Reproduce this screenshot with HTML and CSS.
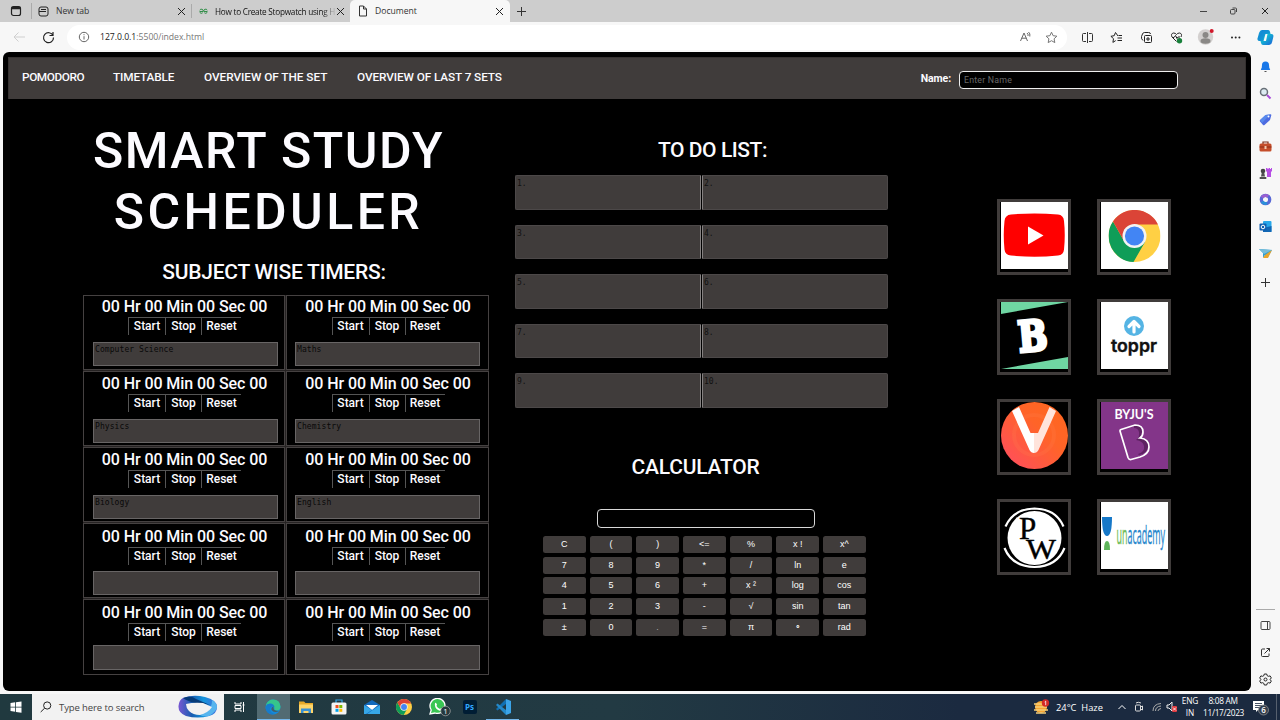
FILE: index.html
```html
<!DOCTYPE html>
<html lang="en">
<head>
<meta charset="utf-8">
<title>Document</title>
<link rel="stylesheet" href="styles.css">
</head>
<body>
<svg class="defs" width="0" height="0">
  <symbol id="chrome" viewBox="0 0 52 52">
    <circle cx="26" cy="26" r="26" fill="#ffd044"/>
    <path d="M4.5 11.500 A26 26 0 0 0 25 52 L36.500 32 L26 26 L15.500 31 Z" fill="#0f9d58"/>
    <path d="M4.500 11.500 A26 26 0 0 1 49.500 14.500 H26 L15.500 31 Z" fill="#db4437"/>
    <circle cx="26" cy="26" r="12" fill="#f3f3f3"/><circle cx="26" cy="26" r="9.600" fill="#4285f4"/>
  </symbol>
</svg>

<header class="tabs">
  <div class="tab-menu"><svg width="12" height="12" viewBox="0 0 12 12"><rect x="1.500" y="1.500" width="9" height="9" rx="2" fill="none" stroke="#222" stroke-width="1.200"/><path d="M1.500 3.500h9M1.500 2.500h9" stroke="#222" stroke-width="1.300"/></svg></div>
  <div class="tab tab-new"><svg width="11" height="11" viewBox="0 0 11 11" fill="none" stroke="#222"><rect x="1" y="1" width="9" height="9" rx="2"/><path d="M3 3.500h5M1 5.500h7"/></svg><span>New tab</span><i class="x"></i></div>
  <div class="tab tab-how"><svg width="9" height="7" viewBox="0 0 11 8" fill="none" stroke="#2f8d46" stroke-width="1.200"><path d="M1 2.500a2 2 0 0 1 4 1.500H1a2 2 0 0 0 3.500 1.500M10 2.500A2 2 0 0 0 6 4h4a2 2 0 0 1-3.500 1.500"/></svg><span class="fade">How to Create Stopwatch using H</span><i class="x"></i></div>
  <div class="tab tab-doc"><svg width="10" height="12" viewBox="0 0 10 12" fill="none" stroke="#333"><path d="M1.500 1h4l3 3v7h-7zM5.500 1v3h3"/></svg><span>Document</span><i class="x"></i></div>
  <div class="plus"></div>
  <div class="window-buttons">
    <svg width="10" height="10" viewBox="0 0 10 10"><path d="M2 5.500h7" stroke="#444"/></svg>
    <svg width="10" height="10" viewBox="0 0 10 10" fill="none" stroke="#444"><rect x="1.500" y="3.500" width="4.500" height="4.500" rx="1"/><path d="M3.500 2h3a1 1 0 0 1 1 1v3"/></svg>
    <svg width="10" height="10" viewBox="0 0 10 10"><path d="M2 2l6 6M8 2l-6 6" stroke="#222"/></svg>
  </div>
</header>

<div class="toolbar">
  <svg class="back" width="14" height="12" viewBox="0 0 14 12" fill="none" stroke="#cfcfcf"><path d="M13 6H2M6.500 1.500L2 6l4.500 4.500"/></svg>
  <svg class="reload" width="13" height="13" viewBox="0 0 13 13" fill="none" stroke="#222" stroke-width="1.200"><path d="M11 4.500a5 5 0 1 0 .5 2M11 1v3.500H7.500"/></svg>
  <div class="address">
    <svg width="12" height="12" viewBox="0 0 12 12" fill="none" stroke="#666"><circle cx="6" cy="6" r="4.700"/><path d="M6 5.200v3.300M6 3.200v1"/></svg>
    <span class="url"><b>127.0.0.1</b>:5500/index.html</span>
    <svg class="read" width="13" height="12" viewBox="0 0 13 12" fill="none" stroke="#666"><path d="M1.500 10L5 2l3.500 8M2.700 7.200h4.600M8 2q1.500 1 1 3M9.500 1q2 1.500 1.300 4.500"/></svg>
    <svg width="13" height="13" viewBox="0 0 13 13" fill="none" stroke="#777"><path d="M6.500 1.200l1.600 3.500 3.800.5-2.800 2.600.7 3.800-3.300-1.900-3.300 1.900.7-3.800L1.100 5.200l3.800-.5z"/></svg>
  </div>
  <div class="actions">
    <svg width="13" height="13" viewBox="0 0 13 13" fill="none" stroke="#333"><path d="M5 2.500H2.500a1 1 0 0 0-1 1v6a1 1 0 0 0 1 1H5M8 2.500h2.500a1 1 0 0 1 1 1v6a1 1 0 0 1-1 1H8M6.500 1v11"/></svg>
    <svg width="13" height="13" viewBox="0 0 13 13" fill="none" stroke="#222"><path d="M8 5L5.500 1.500 4.200 4.700l-3.300.6 2.600 2.400-.6 3.700 2.800-1.800M8.500 4.500H12M7.500 7H12M7.500 9.500H12"/></svg>
    <svg width="13" height="13" viewBox="0 0 13 13" fill="none" stroke="#222"><path d="M3 9.500Q1 8 1.500 5.500L2.500 3q.5-1.500 2-1.500h4q2 0 2 1.500"/><rect x="4.500" y="4.500" width="7" height="7" rx="1"/><path d="M8 6v4M6 8h4"/></svg>
    <svg width="13" height="13" viewBox="0 0 13 13" fill="none" stroke="#222"><path d="M6.500 10.500L2 6Q.5 2.500 3.500 2q2 0 3 1.500Q7.500 2 9.500 2q3 .5 1.500 4M2 6.500h2l1.500-2 1.500 3 1-1.500h2"/><circle cx="9.500" cy="9.800" r="2.700" fill="#18803a" stroke="none"/></svg>
    <svg width="18" height="18" viewBox="0 0 18 18"><circle cx="8.500" cy="9" r="7.700" fill="#d3d0cf"/><circle cx="8.500" cy="7" r="3" fill="#8a8886"/><ellipse cx="8.500" cy="13" rx="5" ry="2.700" fill="#8a8886"/><circle cx="14.700" cy="3" r="2" fill="#d1182b"/></svg>
    <svg width="13" height="13" viewBox="0 0 13 13" fill="#222"><circle cx="3" cy="6.500" r="1"/><circle cx="6.700" cy="6.500" r="1"/><circle cx="10.400" cy="6.500" r="1"/></svg>
    <svg width="17" height="17" viewBox="0 0 17 17"><defs><linearGradient id="cp" x2="1" y2="1"><stop stop-color="#1688d9"/><stop offset=".5" stop-color="#14b7d2"/><stop offset="1" stop-color="#1b5ed8"/></linearGradient></defs><path d="M5 1h6q1.500 0 2 2l.5 2h1Q17 5 16.300 8l-1.200 5q-.8 3-3 3H6q-1.500 0-2-2l-.5-2H2.500Q0 12 .7 9l1.300-5Q3 1 5 1z" fill="url(#cp)"/><path d="M8.500 5h2L9 12H6.500z" fill="#f7f7f7"/><path d="M5 1h6q1.500 0 2 2l.3 1.500H9Q7.500 4.500 7 7l-1 5H2.500Q0 12 .7 9z" fill="#1479d3" opacity=".5"/></svg>
  </div>
</div>

<div class="workspace">
<main class="page">
  <nav class="nav">
    <a>POMODORO</a><a>TIMETABLE</a><a>OVERVIEW OF THE SET</a><a>OVERVIEW OF LAST 7 SETS</a>
    <label>Name:</label><div class="name-input">Enter Name</div>
  </nav>
  <div class="columns">
    <section class="study">
      <h1>SMART STUDY<br><span>SCHEDULER</span></h1>
      <h2 class="h-timers">SUBJECT WISE TIMERS:</h2>
      <div class="timers">
        <div class="timer"><p>00 Hr 00 Min 00 Sec 00</p><div class="btns"><b>Start</b><b>Stop</b><b>Reset</b></div><div class="note">Computer Science</div></div>
        <div class="timer"><p>00 Hr 00 Min 00 Sec 00</p><div class="btns"><b>Start</b><b>Stop</b><b>Reset</b></div><div class="note">Maths</div></div>
        <div class="timer mid"><p>00 Hr 00 Min 00 Sec 00</p><div class="btns"><b>Start</b><b>Stop</b><b>Reset</b></div><div class="note">Physics</div></div>
        <div class="timer mid"><p>00 Hr 00 Min 00 Sec 00</p><div class="btns"><b>Start</b><b>Stop</b><b>Reset</b></div><div class="note">Chemistry</div></div>
        <div class="timer mid"><p>00 Hr 00 Min 00 Sec 00</p><div class="btns"><b>Start</b><b>Stop</b><b>Reset</b></div><div class="note">Biology</div></div>
        <div class="timer mid"><p>00 Hr 00 Min 00 Sec 00</p><div class="btns"><b>Start</b><b>Stop</b><b>Reset</b></div><div class="note">English</div></div>
        <div class="timer low"><p>00 Hr 00 Min 00 Sec 00</p><div class="btns"><b>Start</b><b>Stop</b><b>Reset</b></div><div class="note"></div></div>
        <div class="timer low"><p>00 Hr 00 Min 00 Sec 00</p><div class="btns"><b>Start</b><b>Stop</b><b>Reset</b></div><div class="note"></div></div>
        <div class="timer last"><p>00 Hr 00 Min 00 Sec 00</p><div class="btns"><b>Start</b><b>Stop</b><b>Reset</b></div><div class="note"></div></div>
        <div class="timer last"><p>00 Hr 00 Min 00 Sec 00</p><div class="btns"><b>Start</b><b>Stop</b><b>Reset</b></div><div class="note"></div></div>
      </div>
    </section>

    <section class="middle">
      <h2 class="h-todo">TO DO LIST:</h2>
      <div class="todo">
        <div>1.</div><div>2.</div><div>3.</div><div>4.</div><div>5.</div><div>6.</div><div>7.</div><div>8.</div><div>9.</div><div>10.</div>
      </div>
      <h2 class="h-calc">CALCULATOR</h2>
      <div class="display"></div>
      <div class="keys">
        <b>C</b><b>(</b><b>)</b><b>&lt;=</b><b>%</b><b>x !</b><b>x^</b>
        <b>7</b><b>8</b><b>9</b><b>*</b><b>/</b><b>ln</b><b>e</b>
        <b>4</b><b>5</b><b>6</b><b>+</b><b>x ²</b><b>log</b><b>cos</b>
        <b>1</b><b>2</b><b>3</b><b>-</b><b>√</b><b>sin</b><b>tan</b>
        <b>±</b><b>0</b><b class="dim">.</b><b>=</b><b>π</b><b>∘</b><b>rad</b>
      </div>
    </section>

    <section class="links">
      <a class="tile"><svg viewBox="0 0 67 67"><rect width="67" height="67" fill="#fff"/><path d="M10 12.500Q33.500 10.500 57 12.500 62.500 13 63 19 64.500 33 63 47.500 62.500 53 57 53.500 33.500 56 10 53.500 4 53 3.500 47.500 2 33 3.500 19 4 13 10 12.500z" fill="#f00"/><path d="M27 24.500v18L42.500 33.500z" fill="#fff"/></svg></a>
      <a class="tile"><svg viewBox="0 0 67 67"><rect width="67" height="67" fill="#fff"/><use href="#chrome" x="7.500" y="8" width="52" height="52"/></svg></a>
      <a class="tile"><svg viewBox="0 0 67 67"><rect width="67" height="67"/><path d="M0 0h67L0 12zM67 67H0l67-12z" fill="#6fd6a3"/><text transform="translate(18.500 50) rotate(-5)" textLength="29" lengthAdjust="spacingAndGlyphs" font-family="DejaVu Serif" font-weight="bold" font-size="42" fill="#fff" stroke="#fff" stroke-width="3.500">B</text></svg></a>
      <a class="tile"><svg viewBox="0 0 67 67"><rect width="67" height="67" fill="#fff"/><circle cx="33" cy="24" r="10" fill="#55b4e4"/><path d="M33 30v-9M28 24.500l5-5 5 5" fill="none" stroke="#fff" stroke-width="3.200" stroke-linecap="round" stroke-linejoin="round"/><text x="10" y="50" textLength="46" lengthAdjust="spacingAndGlyphs" font-family="Inter" font-weight="600" font-size="18" fill="#111" stroke="#111" stroke-width=".4">toppr</text></svg></a>
      <a class="tile"><svg viewBox="0 0 67 67"><defs><linearGradient id="v" x1="0" y1="1" x2="1" y2="0"><stop stop-color="#ff4b63"/><stop offset=".6" stop-color="#ff6428"/><stop offset="1" stop-color="#ff671d"/></linearGradient></defs><circle cx="33.500" cy="33.500" r="33.500" fill="url(#v)"/><circle cx="33" cy="33" r="20" fill="none" stroke="#ff8050" stroke-width="4" opacity=".2"/><path d="M11 9L18 5 29.500 31H33V51q-3 0-4.500-3z" fill="#fff"/><path d="M55 9L48.500 5 37 31H33V51q3 0 4.500-3z" fill="#ffe4dc"/></svg></a>
      <a class="tile"><svg viewBox="0 0 67 67"><rect width="67" height="67" fill="#833589"/><text x="13.500" y="17" textLength="39" lengthAdjust="spacingAndGlyphs" font-family="Lato" font-weight="bold" font-size="12.500" fill="#fff">BYJU'S</text><path d="M33 24q8-1 8 5 0 4-3 7 9 0 9 8 0 7-9 9l-1-1q7-2 6-8-1-5-8-6 4-3 3-8-1-4-5-4z" fill="#5e2262"/><path d="M20 27.500l14-4.500q8 0 8 7 0 4-3 6 9 1 9 9 0 7-9 10l-9 2.500q-2 .5-3-2L19 29q-.3-1 1-1.500z" fill="none" stroke="#fff" stroke-width="1.700"/></svg></a>
      <a class="tile"><svg viewBox="0 0 67 67"><circle cx="33.500" cy="36" r="27" fill="#fff"/><path d="M4.500 24.500Q12 7 33.500 6.500 55 7 62.500 24.500M3.500 46Q11 64.500 33.500 65 56 64.500 63.500 46" fill="none" stroke="#fff" stroke-width="2.200"/><text x="18" y="36.500" font-family="Liberation Serif" font-size="31" fill="#000" stroke="#000" stroke-width=".4">P</text><text x="25" y="57" textLength="30" lengthAdjust="spacingAndGlyphs" font-family="Liberation Serif" font-size="30" fill="#000" stroke="#000" stroke-width=".4">W</text></svg></a>
      <a class="tile"><svg viewBox="0 0 67 67"><rect width="67" height="67" fill="#fff"/><path d="M1 15h10q0 19-5 19T1 15z" fill="#1678c8"/><path d="M3 48q0-9 3-9t3 9z" fill="#5eb55b"/><text transform="translate(15.500 42) scale(.345 1)" font-family="Open Sans" font-size="26" stroke-width=".4"><tspan fill="#6fbd56" stroke="#6fbd56">un</tspan><tspan fill="#2787cc" stroke="#2787cc">academy</tspan></text></svg></a>
    </section>
  </div>
</main>

<aside class="side">
  <svg viewBox="0 0 13 13"><path d="M2 9q1-1 1-4a3.500 3.500 0 0 1 7 0q0 3 1 4 .5 1-.5 1h-8q-1 0-.5-1z" fill="#1877e8"/><path d="M5 11h3q-1.500 2-3 0z" fill="#444"/></svg>
  <svg viewBox="0 0 13 13"><circle cx="5" cy="5" r="3.500" fill="#ddebf2" stroke="#687078" stroke-width="1.500"/><path d="M8 8l3.500 3.500" stroke="#a94bd8" stroke-width="2"/></svg>
  <svg viewBox="0 0 13 13"><path d="M1 7l5.500-5 5-.7q1 0 .8 1L11 7l-5.500 5q-1 .6-1.700-.3L1 8.500q-.6-.8 0-1.500z" fill="#4d6be0"/><path d="M1 7l5.500-5 5-.7L3 10z" fill="#5f9df5" opacity=".6"/><circle cx="9.500" cy="3.500" r="1" fill="#fff"/></svg>
  <svg viewBox="0 0 13 13"><path d="M4 4V2h5v2" fill="none" stroke="#7c2d18" stroke-width="1.200"/><rect x=".5" y="3.500" width="12" height="8" rx="1.500" fill="#c54e2b"/><path d="M.5 7h12" stroke="#8b2d18"/><rect x="5.500" y="6" width="2" height="3" fill="#f3c8ad"/></svg>
  <svg viewBox="0 0 13 13"><path d="M7 1h1.500v1h1V1h1.500v1h1V1H13v3l-1 1v5H8V5L7 4z" fill="#b64ee4"/><circle cx="4" cy="4" r="2.300" fill="#444"/><path d="M2.700 6h2.600l.7 3.500H2zM.7 10h6.600v2H.7z" fill="#505050"/></svg>
  <svg viewBox="0 0 13 13"><circle cx="6.500" cy="6.500" r="4.200" fill="none" stroke="#5968d6" stroke-width="3.300"/><path d="M3 4.500a4 4 0 0 1 6-1" fill="none" stroke="#9a60d0" stroke-width="3"/><path d="M3 8.500a4 4 0 0 0 5 1.500" fill="none" stroke="#2b91d9" stroke-width="3"/></svg>
  <svg viewBox="0 0 13 13"><rect x="4" y="1" width="8.500" height="11" rx="1" fill="#28a8ea"/><path d="M4 8l8.500-2v6H4z" fill="#1267b4"/><rect x=".5" y="3.500" width="7" height="7" rx="1" fill="#0f5fb0"/><circle cx="4" cy="7" r="1.800" fill="none" stroke="#fff"/></svg>
  <svg viewBox="0 0 13 13"><path d="M0 2l13 1-4.500 8L6 8l-2 3V6z" fill="#2e9fd5"/><path d="M0 2l13 1-8 4z" fill="#77bdd8"/><path d="M4 11l2-3L13 3l-4 8z" fill="#e8a52b"/></svg>
  <svg viewBox="0 0 13 13"><path d="M6.500 4v9M2 8.500h9" stroke="#333"/></svg>
  <hr>
  <svg class="side-low" viewBox="0 0 13 13" fill="none" stroke="#444"><rect x="2" y="2.500" width="9" height="8" rx="1"/><path d="M8.500 2.500v8"/></svg>
  <svg class="side-low" viewBox="0 0 13 13" fill="none" stroke="#333"><path d="M6 3H3.500a1 1 0 0 0-1 1v5.500a1 1 0 0 0 1 1H9a1 1 0 0 0 1-1V7.500M5.500 7.500l5-5M7.500 2.500h3v3"/></svg>
  <svg class="side-low" viewBox="0 0 13 13" fill="none" stroke="#222"><path d="M5.300 1h2.400l.5 1.700 1.200.6 1.700-.4 1.200 2-1.200 1.600 1.200 1.600-1.200 2-1.700-.4-1.200.6-.5 1.700H5.300l-.5-1.700-1.200-.6-1.700.4-1.200-2 1.200-1.600L.7 4.900l1.200-2 1.700.4 1.200-.6z"/><circle cx="6.500" cy="6.500" r="1.500"/></svg>
</aside>
</div>

<footer class="taskbar">
  <div class="start"><svg width="12" height="12" viewBox="0 0 12 12" fill="#fff"><path d="M.5 2l4.700-.7v4.400H.5zM6 1.200L11.500.4v5.300H6zM.5 6.400h4.700v4.400L.5 10.100zM6 6.400h5.500v5.300L6 10.900z"/></svg></div>
  <div class="search"><svg width="12" height="12" viewBox="0 0 12 12" fill="none" stroke="#222"><circle cx="7.200" cy="4.500" r="3.600"/><path d="M4.600 7.200L.7 11"/></svg><span>Type here to search</span>
    <svg class="ribbon" width="40" height="24" viewBox="0 0 40 24"><defs><linearGradient id="rb"><stop stop-color="#7857d2"/><stop offset=".35" stop-color="#185db0"/><stop offset=".65" stop-color="#1595dc"/><stop offset="1" stop-color="#4470dc"/></linearGradient></defs><path d="M5 3Q15-1 27 2q12 3 12 10t-8 9Q20 24 8 21 0 18 .5 11 1 5 5 3z" fill="url(#rb)"/><path d="M5 3q8-3 13 1l14 6q-8-2-15-2-8-2-12-5z" fill="#073b78"/><path d="M34 5q5 3 5 7t-8 9q-6 1-9-1 12-3 12-15z" fill="#56b5ee"/><path d="M8 9q8-2 17-1l9 4q-4 6-12 8-7 0-11-4Q8 13 8 9z" fill="#f2f2f2"/></svg></div>
  <div class="apps">
    <div class="app"><svg viewBox="0 0 16 16" fill="none" stroke="#fff"><path d="M3 3v2h6V3M3 13v-2h6v2M3 6.500h6v3H3zM11.500 3v10M10.500 6h2"/></svg></div>
    <div class="app active"><svg viewBox="0 0 16 16"><circle cx="8" cy="8" r="7.500" fill="#1689d8"/><path d="M1 6Q3 .5 8 .5q7 0 7.500 7 0 4-4 4-3 0-2-2Q9 5 5 5 2 5 1 7z" fill="#36c58b"/><path d="M1 7q1-3 5-2.500Q9 5 9.500 8q-4-2-4.500 2 0 4 5 5Q2 17 .5 9z" fill="#167ccd"/><path d="M8.500 9q0 3 5.500 3Q9 14.500 6.500 11 6 8 8.500 7.500z" fill="#42606a"/></svg></div>
    <div class="app"><svg viewBox="0 0 16 16"><path d="M1 2.500h5l1.500 1.500H15v10H1z" fill="#e8a928"/><path d="M1 5.500h14V14H1z" fill="#ffd568"/><path d="M3 14V9.500h10V14h-2.500v-2h-5v2z" fill="#3a91d3"/></svg></div>
    <div class="app"><svg viewBox="0 0 16 16"><path d="M5 4V1h6v3" fill="none" stroke="#38a8e8" stroke-width="1.200"/><rect x=".5" y="3.500" width="15" height="12" rx="1.500" fill="#f4f4f4"/><path d="M4.500 6h3v3h-3z" fill="#f25022"/><path d="M8.300 6h3v3h-3z" fill="#7fba00"/><path d="M4.500 9.800h3v3h-3z" fill="#00a4ef"/><path d="M8.300 9.800h3v3h-3z" fill="#ffb900"/></svg></div>
    <div class="app"><svg viewBox="0 0 16 16"><path d="M0 6l8-5 8 5v9H0z" fill="#1269bd"/><path d="M2 6h12L8 11z" fill="#fff"/><path d="M0 6l8 5-6 4H0zM16 6v9H3z" fill="#37a7e7"/></svg></div>
    <div class="app"><svg viewBox="0 0 16 16"><use href="#chrome" width="16" height="16"/></svg></div>
    <div class="app"><svg class="wa" viewBox="0 0 22 19"><path d="M1 16L2.200 12A7.500 7.500 0 1 1 6 15z" fill="#39c653" stroke="#fff" stroke-width="1.300"/><path d="M6 5q1-1 2 1.500L7.500 8q1 2 3.500 3l1.200-1q2 .7 1.300 1.700-1 2-4 .5Q5 10 6 5z" fill="#fff"/><circle cx="16.500" cy="13" r="4.800" fill="#25383d" stroke="#aaa" stroke-width=".7"/><text x="14.300" y="16" font-family="Open Sans" font-size="8" fill="#fff">1</text></svg></div>
    <div class="app"><svg viewBox="0 0 16 16"><rect x="1" y="1" width="14" height="14" rx="2" fill="#001d34"/><text x="3" y="11" font-family="Open Sans" font-weight="bold" font-size="8" fill="#31a8ff">Ps</text></svg></div>
    <div class="app open"><svg viewBox="0 0 16 16"><path d="M11 0v5L2.500 11.500 1 10z" fill="#1070b3"/><path d="M1 6l1.500-1.500L11 11v5z" fill="#2489ca"/><path d="M11 0l5 2v12l-5 2z" fill="#3ba4e8"/></svg></div>
  </div>
  <div class="tray">
    <svg class="weather" width="18" height="17" viewBox="0 0 18 17"><circle cx="8" cy="8" r="6" fill="#f6a431"/><path d="M1 5h8M2 8h12M1 11h14M3 14h10" stroke="#f6ce78" stroke-width="1.500"/><circle cx="12.500" cy="4" r="3.700" fill="#d42b27"/><path d="M11.700 3l1-.8v4" stroke="#fff" stroke-width=".8" fill="none"/></svg>
    <span class="temp">24°C&nbsp; Haze</span>
    <svg class="chev" width="10" height="8" viewBox="0 0 10 8" fill="none" stroke="#fff"><path d="M1.500 6L5 2.500 8.500 6"/></svg>
    <svg class="meet" width="10" height="12" viewBox="0 0 10 12" fill="none" stroke="#ddd"><rect x="1.500" y="4" width="5" height="6" rx="1"/><path d="M6.500 6l2-1v4l-2-1M2 2q2-1.500 5 0"/></svg>
    <svg class="wifi" width="10" height="10" viewBox="0 0 10 10" fill="none" stroke="#aaa"><path d="M1 9Q1 2 9 1.500M3.500 9Q3.500 4.500 9 4M6 9Q6 7 9 6.500"/></svg>
    <svg class="vol" width="12" height="12" viewBox="0 0 12 12"><path d="M1 4h2l3-3v9L3 7H1z" fill="none" stroke="#eee"/><rect x="6" y="5" width="5" height="6" rx="1" fill="#e03b40"/><path d="M7 6.500l3 3M10 6.500l-3 3" stroke="#fff" stroke-width=".8"/></svg>
    <span class="two">ENG<br>IN</span>
    <span class="two clock">8:08 AM<br>11/17/2023</span>
    <svg class="notif" width="18" height="18" viewBox="0 0 18 18"><path d="M1 3h11v9H6l-2 2v-2H1z" fill="#fff"/><path d="M3 5.500h7M3 7.500h7M3 9.500h5" stroke="#1b2a40" stroke-width=".8"/><circle cx="11.500" cy="12" r="5" fill="#35404e" stroke="#999" stroke-width=".7"/><text x="9.300" y="15" font-family="Open Sans" font-weight="600" font-size="8" fill="#fff">6</text></svg>
    <i class="desk"></i>
  </div>
</footer>
</body>
</html>
```
FILE: styles.css
```css
* { box-sizing: border-box; }
body { margin: 0; width: 1280px; height: 720px; overflow: hidden; background: #f7f7f7; font-family: "Open Sans", sans-serif; display: flex; flex-direction: column; }
svg { display: block; flex: none; }
.defs { position: absolute; }
h1, h2, p { margin: 0; }

.tabs { height: 22px; flex: none; background: #cdcdcd; display: flex; align-items: center; font-size: 8.6px; color: #333; }
.tab-menu { width: 32px; height: 16px; padding: 2px 0 0 10px; border-right: 1px solid #aaa; }
.tab { display: flex; align-items: center; height: 22px; white-space: nowrap; }
.tab span { margin-left: 7px; flex: 1; }
.tab-new { width: 160px; padding: 0 7px 0 6px; background: linear-gradient(#aaa, #aaa) right center / 1px 14px no-repeat; }
.tab-how { width: 158px; padding: 0 6px 0 7px; font-size: 8.200px; letter-spacing: -.24px; }
.tab-how .fade { min-width: 0; margin-left: 7px; margin-right: 0; color: #111; }
.fade { mask-image: linear-gradient(90deg, #000 88%, transparent); }
.tab-doc { width: 160px; background: #f7f7f7; border-radius: 5px 5px 0 0; padding: 0 7px 0 8px; }
.x { flex: none; width: 7px; height: 7px; background: linear-gradient(45deg, transparent 44%, #222 44% 56%, transparent 56%), linear-gradient(-45deg, transparent 44%, #222 44% 56%, transparent 56%); }
.plus { width: 9px; height: 9px; margin-left: 7px; background: linear-gradient(#333, #333) center / 9px 1px no-repeat, linear-gradient(#333, #333) center / 1px 9px no-repeat; }
.window-buttons { margin-left: auto; padding-right: 10px; display: flex; gap: 21px; }

.toolbar { height: 30px; flex: none; display: flex; align-items: center; }
.back { margin-left: 12px; }
.reload { margin-left: 16px; }
.address { margin-left: 12px; width: 1002px; height: 25px; border-radius: 13px; background: #fff; display: flex; align-items: center; padding: 0 9px 0 11px; }
.url { flex: 1; margin-left: 10px; font-size: 8.700px; letter-spacing: -.04px; color: #777; }
.url b { font-weight: 400; color: #222; }
.read { margin-right: 13px; }
.actions { margin-left: 5px; display: grid; grid-template-columns: repeat(7, 29.700px); justify-items: center; align-items: center; }

.workspace { height: 642px; flex: none; display: flex; }
.page { width: 1248px; height: 639px; margin-left: 3px; padding: 5px; background: #000; border-radius: 6px; color: #fcfbff; font-family: Roboto, sans-serif; }
.nav { height: 42px; background: #403c3b; border: 1px solid #353130; border-bottom: 0; display: flex; align-items: center; padding: 0 67px 3px 13px; font-size: 11.800px; font-weight: 500; letter-spacing: -.1px; }
.nav a { margin-right: 29px; white-space: nowrap; }
.nav a:nth-child(1) { width: 62px; letter-spacing: -.4px; } .nav a:nth-child(2) { width: 62px; letter-spacing: -.15px; } .nav a:nth-child(3) { width: 124px; letter-spacing: -.04px; } .nav a:nth-child(4) { width: 147px; }
.nav label { margin-left: auto; font-size: 10.500px; font-weight: 700; margin-top: 3px; }
.name-input { margin-left: 8px; margin-top: 5px; width: 219px; height: 18px; border: 1px solid #eee; border-radius: 4px; background: #000; color: #686868; font: 8.800px/16px Roboto, sans-serif; letter-spacing: .2px; padding-left: 4px; }
.columns { display: flex; }

.study { width: 406px; margin-left: 75px; padding-top: 22px; }
h1 { font-size: 50px; line-height: 61px; font-weight: 500; text-align: center; width: 371px; letter-spacing: 1.500px; }
h1 span { letter-spacing: 3.400px; }
h2 { font-size: 21px; line-height: 24px; font-weight: 500; text-align: center; white-space: nowrap; }
.h-timers { width: 382px; margin-top: 17px; letter-spacing: -.25px; }
.timers { margin-top: 11px; display: grid; grid-template-columns: 202px 203px; gap: 1px; grid-template-rows: repeat(4, 75px) 76px; background: #262323; }
.timer { background: #000; border: 1px solid #454141; padding: 3px 9px 0; }
.timer:nth-child(even) { padding-left: 8px; padding-right: 10px; }
.timer p { font-size: 16px; line-height: 16px; font-weight: 500; text-align: center; white-space: nowrap; letter-spacing: -.08px; padding-left: 1px; }
.timer:nth-child(even) p { padding-left: 3px; }
.btns { display: flex; justify-content: center; margin: 2px 0 7px; padding-left: 1px; }
.timer:nth-child(even) .btns { padding-left: 3px; }
.btns b { font-size: 12px; line-height: 16px; font-weight: 500; height: 18px; border-top: 1px solid #555; border-left: 1px solid #555; text-align: center; }
.btns b:nth-child(1) { width: 37px; } .btns b:nth-child(2) { width: 36px; } .btns b:nth-child(3) { width: 40px; }
.note { height: 24px; width: 185px; background: #403c3b; border: 1px solid #686565; color: #080808; font: 8px/12px "DejaVu Sans Mono", monospace; padding: 1px; letter-spacing: .08px; }
.timer.mid { padding-top: 4px; }
.timer.low { padding-top: 5px; }
.timer.low .btns { margin-bottom: 6px; }
.timer.last { padding-top: 5px; }
.timer.last .btns { margin-bottom: 4px; }
.timer.last .note { height: 25px; }

.middle { width: 373px; margin-left: 26px; padding-top: 39px; }
.h-todo { padding-left: 22px; letter-spacing: -.45px; }
.todo { margin-top: 13px; display: grid; grid-template-columns: 186px 186px; column-gap: 1px; row-gap: 15px; grid-template-rows: repeat(5, 34.600px); }
.todo div { background: #403c3b; border: 1px solid #4c4848; font: 8px/13px "DejaVu Sans Mono", monospace; color: #111; padding-left: 1px; padding-top: 1px; border-radius: 2px 0 0 2px; border-right-color: #858181; }
.todo div:nth-child(even) { border-color: #4c4848; border-left-color: #858181; border-radius: 0 2px 2px 0; padding-left: 1px; }
.h-calc { margin-top: 47px; padding-right: 12px; letter-spacing: -.2px; }
.display { margin: 30px 0 0 82px; width: 218px; height: 19px; border: 1px solid #d8d8d8; border-radius: 4px; }
.keys { margin: 8px 0 0 28px; width: 323px; display: grid; grid-template-columns: repeat(7, 42.500px); column-gap: 4.200px; grid-auto-rows: 17px; row-gap: 3.700px; }
.keys b { background: #403c3b; border-radius: 2.500px; font: 9px/17px "Liberation Sans", sans-serif; text-align: center; color: #fff; }
.keys .dim { color: #aaa; }

.links { margin: 100px 0 0 109px; display: grid; grid-template-columns: 74px 74px; column-gap: 26px; grid-auto-rows: 76px; row-gap: 24px; }
.tile { border: 3.500px solid #403c3b; padding-left: .5px; }
.tile svg { width: 67px; height: 67px; }

.side { width: 29px; display: flex; flex-direction: column; align-items: center; }
.side svg { width: 13px; height: 13px; margin: 8px 0 5.700px; }
.side hr { width: 19px; border: 0; border-top: 1px solid #aaa; margin: auto 0 0; }
.side .side-low { margin: 9px 0 5px; }
.side .side-low:last-child { margin-bottom: 8px; }

.taskbar { height: 26px; flex: none; background: linear-gradient(90deg, #20393f, #223a43 48%, #1b2a40 75%); display: flex; color: #fff; }
.start { width: 32px; display: flex; align-items: center; justify-content: center; }
.search { width: 192px; background: #f2f2f2; color: #444; display: flex; align-items: center; padding-left: 8px; font-size: 9.500px; letter-spacing: -.1px; }
.search span { margin-left: 7px; white-space: nowrap; }
.ribbon { margin-left: auto; margin-right: 6px; }
.apps { display: flex; }
.app { width: 32.800px; display: flex; align-items: center; justify-content: center; border-bottom: 1px solid transparent; }
.app svg { width: 16px; height: 16px; }
.app .wa { width: 22px; height: 19px; margin-left: 5px; margin-top: 2px; }
.app.active { background: #526b72; border-color: #75b7ea; }
.app.open { border-color: #75b7ea; }
.tray { margin-left: auto; display: flex; align-items: center; font-size: 9.300px; white-space: nowrap; }
.weather { margin-right: 1px; }
.temp { margin-left: 4px; width: 47px; }
.chev { margin-left: 14px; }
.meet { margin-left: 7px; }
.wifi { margin-left: 8px; }
.vol { margin-left: 4px; }
.two { font-size: 8.300px; line-height: 12px; text-align: center; margin-left: 3px; width: 18px; letter-spacing: -.1px; }
.clock { width: 40px; margin-left: 4px; letter-spacing: -.3px; }
.notif { margin-left: 9px; }
.desk { width: 1px; height: 26px; margin: 0 3px 0 6px; background: #56606e; }
```
